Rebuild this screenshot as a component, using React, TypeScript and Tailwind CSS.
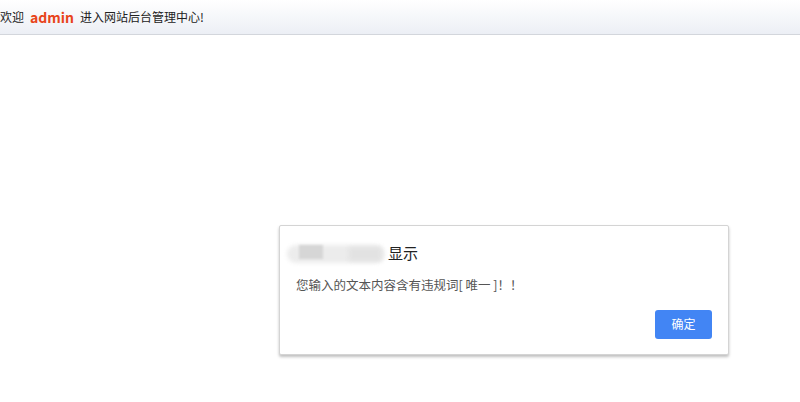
import React from "react";

const App: React.FC = () => {
  return (
    <div
      className="w-[800px] h-[402px] bg-white relative overflow-hidden"
      style={{ fontFamily: '"Microsoft YaHei", "Noto Sans CJK SC", "Liberation Sans", sans-serif' }}
    >
      {/* top bar */}
      <div className="h-[35px] bg-gradient-to-b from-white to-[#eceff5] border-b border-[#d3d6dc] flex items-center text-[12px] text-[#222]">
        <span>欢迎</span>
        <span className="mx-[6px] text-[14px] font-bold text-[#e8441b]">admin</span>
        <span>进入网站后台管理中心!</span>
      </div>

      {/* alert dialog */}
      <div className="absolute left-[279px] top-[225px] w-[450px] h-[130px] bg-white border border-[#d4d4d4] rounded-[2px] shadow-[0_2px_3px_rgba(0,0,0,0.25)] px-[16px] pt-[13px]">
        <div className="flex items-center h-[28px]">
          <div className="relative -ml-[9px] w-[98px] h-[22px] mr-[3px]">
            <div className="absolute left-[0px] top-[3px] w-[98px] h-[18px] rounded-full bg-[#ececec] blur-[2px]" />
            <div className="absolute left-[12px] top-[3px] w-[24px] h-[14px] bg-[#d6d6d6] blur-[1px]" />
            <div className="absolute left-[62px] top-[5px] w-[32px] h-[14px] bg-[#e2e2e2] blur-[2px]" />
          </div>
          <span className="text-[15px] text-[#222]">显示</span>
        </div>
        <div className="mt-[9px] text-[12.5px] text-[#555]">您输入的文本内容含有违规词[ 唯一 ]！！</div>
        <div className="flex justify-end mt-[15px]">
          <button className="w-[57px] h-[29px] rounded-[3px] bg-[#4285f4] text-white text-[12px]">确定</button>
        </div>
      </div>
    </div>
  );
};

export default App;
